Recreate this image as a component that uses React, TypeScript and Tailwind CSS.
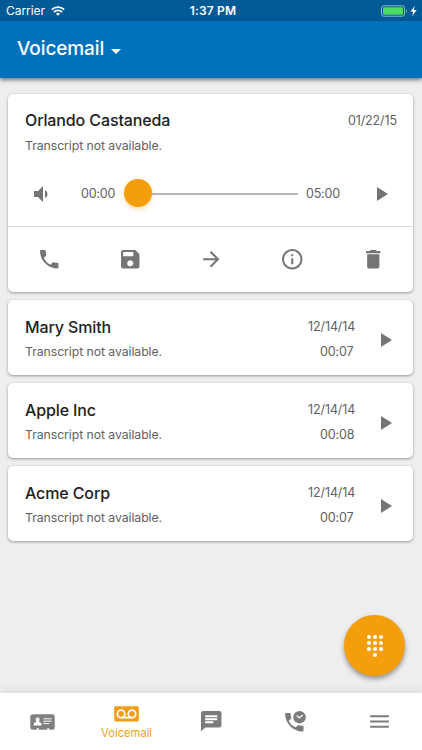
import React, { useState } from 'react';
import {
  MdArrowDropDown,
  MdArrowForward,
  MdChat,
  MdDelete,
  MdInfoOutline,
  MdMenu,
  MdPhone,
  MdPlayArrow,
  MdSave,
  MdVolumeDown,
} from 'react-icons/md';

interface Voicemail {
  id: number;
  name: string;
  date: string;
  duration: string;
}

const voicemails: Voicemail[] = [
  { id: 2, name: 'Mary Smith', date: '12/14/14', duration: '00:07' },
  { id: 3, name: 'Apple Inc', date: '12/14/14', duration: '00:08' },
  { id: 4, name: 'Acme Corp', date: '12/14/14', duration: '00:07' },
];

const actions = [
  { label: 'Call', Icon: MdPhone },
  { label: 'Save', Icon: MdSave },
  { label: 'Forward', Icon: MdArrowForward },
  { label: 'Info', Icon: MdInfoOutline },
  { label: 'Delete', Icon: MdDelete },
];

const WifiIcon = () => (
  <svg viewBox="0 0 14 10" className="w-[14px] h-[10px]" fill="none" stroke="white" strokeWidth="1.8">
    <path d="M.8 3.6a8.8 8.8 0 0 1 12.4 0" />
    <path d="M3 6a5.7 5.7 0 0 1 8 0" />
    <path d="M7 9.8 4.9 7.7a3 3 0 0 1 4.2 0z" fill="white" stroke="none" />
  </svg>
);

const BatteryIcon = () => (
  <svg viewBox="0 0 38 12" className="w-[38px] h-[12px]">
    <rect x="1.5" y=".8" width="23" height="10.4" rx="2" fill="none" stroke="#8fb5d3" />
    <rect x="3" y="2.3" width="20" height="7.4" rx=".8" fill="#4cd964" />
    <path d="M26 4.2c1.2.4 1.2 3.2 0 3.6z" fill="#8fb5d3" />
    <path d="M34.7.8 30.5 6.8h2.7l-1 4.4 4.5-6.1h-2.8z" fill="white" />
  </svg>
);

const ContactsIcon = () => (
  <svg viewBox="0 0 25 16" className="w-[25px] h-[16px]" fill="#808080">
    <path d="M2.8.3h19.4a2.5 2.5 0 0 1 2.5 2.5v10.4a2.5 2.5 0 0 1-2.5 2.5h-3v-1.4h-2v1.4H8.8v-1.4h-2v1.4h-4a2.5 2.5 0 0 1-2.5-2.5V2.8A2.5 2.5 0 0 1 2.8.3z" />
    <ellipse cx="7.6" cy="5.7" rx="2" ry="2.5" fill="white" />
    <path d="M3.7 11.4V10c0-1.1 1.3-1.5 2.6-1.9h2.6c1.3.4 2.6.8 2.6 1.9v1.4z" fill="white" />
    <path d="M13.4 4.8h8.2M13.4 7.2h8.2M13.4 9.6h5.8" stroke="white" strokeWidth="1" />
  </svg>
);

const VoicemailIcon = () => (
  <svg viewBox="0 0 25 16" className="w-[25px] h-[16px]">
    <rect x=".2" y=".3" width="24.6" height="15.2" rx="1.4" fill="#f09c15" />
    <g fill="none" stroke="white" strokeWidth="1.8">
      <circle cx="7.1" cy="7.9" r="3.7" />
      <circle cx="18" cy="7.9" r="3.7" />
      <path d="M7.1 11.6H18" />
    </g>
  </svg>
);

const CallHistoryIcon = () => (
  <svg viewBox="0 0 22 21" className="w-[22px] h-[21px] ml-px">
    <path
      d="M1.1 2h3.6c.6 0 1 .4 1 1 0 1.3.2 2.5.6 3.7.1.4 0 .8-.3 1l-2.3 2.3a15.6 15.6 0 0 0 6.8 6.6l2.2-2.2c.3-.3.7-.4 1.1-.2 1.2.4 2.5.6 3.7.6.6 0 1 .4 1 1v3.7c0 .5-.4 1-1 1C8.2 20.5.1 12.3.1 3c0-.6.4-1 1-1z"
      fill="#7b7b7b"
    />
    <circle cx="14.5" cy="6.2" r="6.2" fill="#7b7b7b" />
    <path d="m11.6 4.4 2.6 2.5 3.5-3" fill="none" stroke="white" strokeWidth="1.3" />
  </svg>
);

const DialpadIcon = () => (
  <svg viewBox="0 0 18 24" className="w-[18px] h-[24px]" fill="white">
    {[3, 9, 15].map((y) =>
      [3, 9, 15].map((x) => <circle key={`${x}-${y}`} cx={x} cy={y} r="2.1" />)
    )}
    <circle cx="9" cy="21" r="2.1" />
  </svg>
);

const StatusBar = () => (
  <div className="h-[21px] bg-[#005a96] grid grid-cols-3 items-center text-white text-[12px] pl-[6px] pr-[4px] shrink-0">
    <div className="flex items-center gap-[6px]">
      <span className="tracking-[-0.05px]">Carrier</span>
      <WifiIcon />
    </div>
    <span className="text-center font-semibold tracking-[0.2px] ml-[2px]">1:37 PM</span>
    <div className="flex justify-end">
      <BatteryIcon />
    </div>
  </div>
);

const ActiveVoicemail = () => (
  <section className="h-[198px] rounded-[5px] bg-white shadow-[0_1px_3px_rgba(0,0,0,0.38)]">
    <div className="h-[132px] pl-[17px] pr-[16px] pt-[14px]">
      <div className="flex justify-between items-center h-6">
        <h2 className="text-[16px] font-medium tracking-[-0.12px] text-[#212121]">Orlando Castaneda</h2>
        <span className="text-[12.5px] tracking-[-0.1px] mt-[2px]">01/22/15</span>
      </div>
      <p className="text-[12.3px] leading-5 mt-[4px] tracking-[-0.08px]">Transcript not available.</p>
      <div className="flex items-center h-[30px] mt-[23px] pl-[4px] pr-[4px]">
        <MdVolumeDown size={24} color="#757575" />
        <span className="w-[38px] ml-[28px] text-[12.5px] tracking-[-0.2px]">00:00</span>
        <div className="flex items-center w-[174px] ml-[5px] -mt-[2px]">
          <div className="size-[28px] rounded-full bg-[#f59e0b] shadow-[0_2px_5px_rgba(245,158,11,0.35)]" />
          <div className="flex-1 h-[2px] mt-[2px] bg-[#b7b7b7]" />
        </div>
        <span className="ml-[8px] text-[12.5px] tracking-[-0.2px]">05:00</span>
        <MdPlayArrow size={24} color="#757575" className="ml-auto" />
      </div>
    </div>
    <div className="h-[66px] border-t border-[#dedede] grid grid-cols-5 items-center">
      {actions.map(({ label, Icon }) => (
        <button key={label} aria-label={label} className="flex justify-center pl-px">
          <Icon size={24.5} color="#757575" />
        </button>
      ))}
    </div>
  </section>
);

const VoicemailCard: React.FC<{ item: Voicemail }> = ({ item }) => (
  <section className="h-[75px] rounded-[5px] bg-white shadow-[0_1px_3px_rgba(0,0,0,0.38)] flex items-center pl-[17px] pr-[16px] pt-[2px]">
    <div className="flex-1">
      <h2 className="text-[16px] leading-6 font-medium tracking-[-0.12px] text-[#212121]">{item.name}</h2>
      <p className="text-[12.3px] leading-5 mt-[3px] tracking-[-0.08px]">Transcript not available.</p>
    </div>
    <div className="w-[49px] mr-[16px] text-[12.5px] tracking-[-0.1px]">
      <div className="h-6 leading-6">{item.date}</div>
      <div className="leading-5 mt-[3px] pl-[12px]">{item.duration}</div>
    </div>
    <MdPlayArrow size={24} color="#757575" className="mt-[3px]" />
  </section>
);

export default function App() {
  const [tab, setTab] = useState('Voicemail');

  const tabs = [
    { label: 'Contacts', icon: <ContactsIcon /> },
    { label: 'Voicemail', icon: <VoicemailIcon /> },
    { label: 'Messages', icon: <MdChat size={24.5} color="#7b7b7b" /> },
    { label: 'History', icon: <CallHistoryIcon /> },
    { label: 'Menu', icon: <MdMenu size={25} color="#7b7b7b" /> },
  ];

  return (
    <div className="relative w-[422px] h-[750px] overflow-hidden flex flex-col bg-[#eeeeee] text-[#616161] font-['Inter',sans-serif]">
      <StatusBar />
      <header className="h-[57px] shrink-0 bg-[#0071bc] shadow-[0_2px_4px_rgba(0,0,0,0.5)] flex items-center pl-[17px] text-white">
        <h1 className="text-[19px] font-medium tracking-[-0.1px]">Voicemail</h1>
        <MdArrowDropDown size={24} className="mt-[3px]" />
      </header>

      <main className="flex-1 pl-2 pr-[9px] pt-4 flex flex-col gap-2">
        <ActiveVoicemail />
        {voicemails.map((item) => (
          <VoicemailCard key={item.id} item={item} />
        ))}
      </main>

      <button
        aria-label="Dialpad"
        className="absolute left-[344px] top-[615px] size-[61px] rounded-full bg-[#f59e0b] shadow-[0_3px_5px_rgba(0,0,0,0.38)] flex items-center justify-center"
      >
        <DialpadIcon />
      </button>

      <nav className="h-[57px] shrink-0 bg-white shadow-[0_0_10px_rgba(0,0,0,0.13)] grid grid-cols-5">
        {tabs.map(({ label, icon }) => (
          <button
            key={label}
            aria-label={label}
            onClick={() => setTab(label)}
            className="flex flex-col items-center justify-center"
          >
            {icon}
            {tab === label && (
              <span className="text-[11.2px] leading-4 mt-[3px] -mb-[3px] text-[#f0a020]">{label}</span>
            )}
          </button>
        ))}
      </nav>
    </div>
  );
}
